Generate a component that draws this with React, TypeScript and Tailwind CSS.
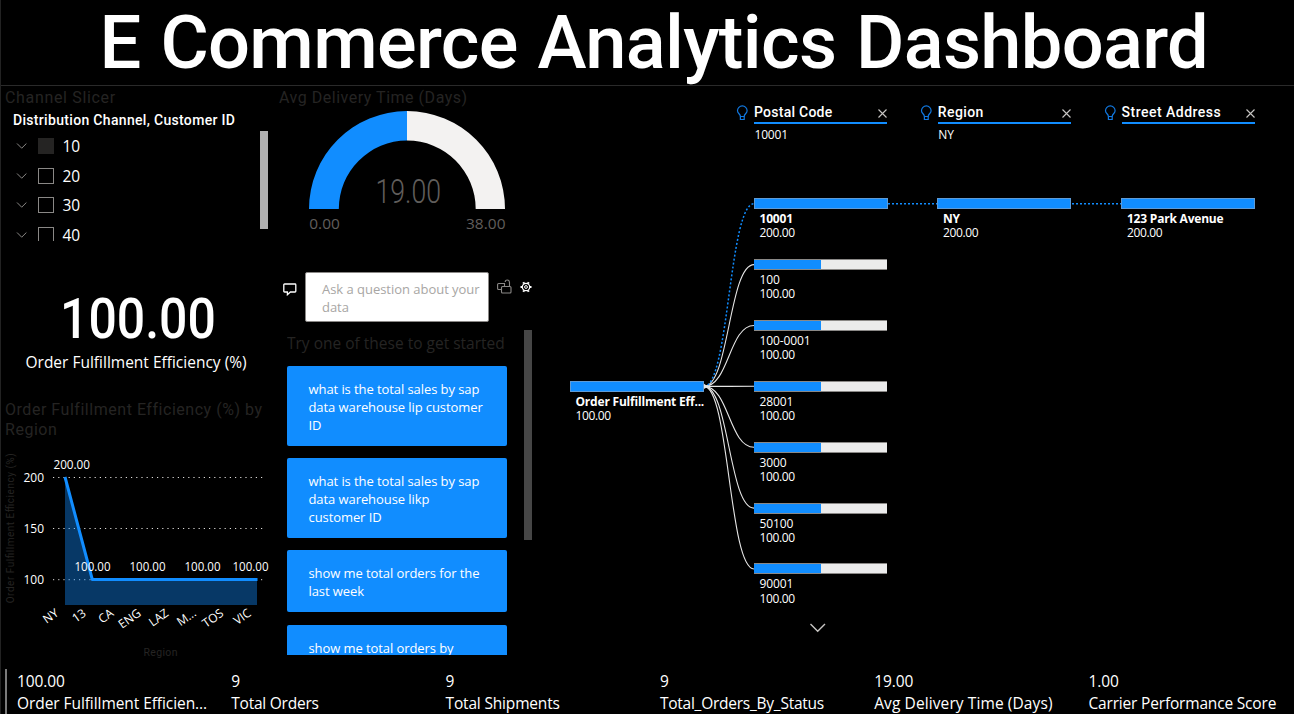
import React from "react";

const DIN = "font-['Roboto',sans-serif]";

const channels = [
  { id: "10", filled: true },
  { id: "20", filled: false },
  { id: "30", filled: false },
  { id: "40", filled: false },
];

function ChannelSlicer() {
  return (
    <section className="flex h-[186px] flex-col">
      <h2 className={`${DIN} h-[23px] pl-[5px] text-[16px] leading-[23px] tracking-[0.66px] text-[#252423]`}>Channel Slicer</h2>
      <div className={`${DIN} h-[22px] pl-[13px] text-[14px] font-medium leading-[23px] tracking-[0.32px] text-white`}>
        Distribution Channel, Customer ID
      </div>
      <div className="flex justify-between pr-[7px]">
        <ul className="flex h-[110px] flex-col overflow-hidden pl-[16px]">
          {channels.map((c) => (
            <li key={c.id} className="flex h-[29.7px] shrink-0 items-center text-[15.5px] leading-[29px] text-white">
              <svg width="12" height="8" viewBox="0 0 12 8" fill="none" stroke="#8a8886" strokeWidth="1">
                <path d="M1 1.5 L5.7 6.2 L10.4 1.5" />
              </svg>
              <span className={c.filled ? "ml-[10px] h-4 w-4 bg-[#252423]" : "ml-[10px] h-4 w-4 border border-[#8a8886]"} />
              <span className="ml-[8.5px] mt-[1px]">{c.id}</span>
            </li>
          ))}
        </ul>
        <div className="h-[98px] w-2 bg-[#b0b0b0]" />
      </div>
    </section>
  );
}

function EfficiencyCard() {
  return (
    <section className="flex h-[114px] flex-col pt-[2px]">
      <div className={`${DIN} ml-[59.5px] h-[62px] origin-left scale-x-[0.908] text-[55px] font-medium leading-[62px] text-white`}>100.00</div>
      <div className="ml-[25.5px] h-6 text-[15.5px] leading-6 text-white">Order Fulfillment Efficiency (%)</div>
    </section>
  );
}

const regions = ["NY", "13", "CA", "ENG", "LAZ", "M...", "TOS", "VIC"];
const ticks = [
  { label: "200", y: 36.5 },
  { label: "150", y: 87.5 },
  { label: "100", y: 138.7 },
];

function RegionChart() {
  return (
    <section className="flex flex-col">
      <h2 className={`${DIN} h-[41px] pl-[5px] text-[16px] leading-[20px] tracking-[0.53px] text-[#252423]`}>
        Order Fulfillment Efficiency (%) by
        <br />
        Region
      </h2>
      <svg width="274" height="219" viewBox="0 0 274 219" fontFamily="Open Sans, sans-serif" fontSize="12" fill="#fff">
        {ticks.map((t) => (
          <g key={t.label}>
            <line x1="53" x2="265" y1={t.y} y2={t.y} stroke="#dddbd9" strokeWidth="1" strokeDasharray="1.2 4" />
            <text x="23.5" y={t.y + 4} textLength="20.5" lengthAdjust="spacingAndGlyphs">{t.label}</text>
          </g>
        ))}
        <path d="M65 36 L92.3 138.5 H257 V164 H65 Z" fill="#118dff" fillOpacity="0.4" />
        <path d="M65 36 L92.3 138.5 H257.5" fill="none" stroke="#118dff" strokeWidth="3" strokeLinejoin="round" />
        <text x="53.5" y="28" textLength="36.5" lengthAdjust="spacingAndGlyphs">200.00</text>
        {[74.5, 129.5, 184.5, 232.5].map((x) => (
          <text key={x} x={x} y="130" textLength="36" lengthAdjust="spacingAndGlyphs">100.00</text>
        ))}
        {regions.map((r, i) => (
          <text key={r} textAnchor="end" transform={`translate(${59.5 + i * 27.5} 174) rotate(-35)`}>{r}</text>
        ))}
        <g fontFamily="Roboto, sans-serif" fill="#252423">
          <text transform="translate(13.8 162.3) rotate(-90)" fontSize="10" textLength="150">Order Fulfillment Efficiency (%)</text>
          <text x="143.5" y="215" fontSize="10.5" textLength="34">Region</text>
        </g>
      </svg>
    </section>
  );
}

function DeliveryGauge() {
  return (
    <section className="flex h-[186px] flex-col">
      <h2 className={`${DIN} h-[23px] pl-[4px] text-[16px] leading-[23px] tracking-[0.52px] text-[#252423]`}>Avg Delivery Time (Days)</h2>
      <svg width="275" height="130" viewBox="0 0 275 130" fill="#605e5c">
        <path d="M34 100 A98 98 0 0 1 132 2 V31.5 A68.5 68.5 0 0 0 63.8 100 Z" fill="#118dff" />
        <path d="M132 2 A98 98 0 0 1 230 100 H200.7 A68.5 68.5 0 0 0 132 31.5 Z" fill="#f3f2f1" />
        <text x="100.5" y="93.7" fontFamily="Roboto, sans-serif" fontWeight="300" fontSize="32.5" textLength="65.5" lengthAdjust="spacingAndGlyphs">19.00</text>
        <g fontFamily="Open Sans, sans-serif" fontSize="15">
          <text x="34.3" y="120.4" textLength="30.5" lengthAdjust="spacingAndGlyphs">0.00</text>
          <text x="191" y="120.4" textLength="39.5" lengthAdjust="spacingAndGlyphs">38.00</text>
        </g>
      </svg>
    </section>
  );
}

const suggestions = [
  { lines: ["what is the total sales by sap", "data warehouse lip customer", "ID"] },
  { lines: ["what is the total sales by sap", "data warehouse likp", "customer ID"] },
  { lines: ["show me total orders for the", "last week"] },
  { lines: ["show me total orders by"] },
];

function QuestionPanel() {
  return (
    <section className="flex h-[383px] flex-col">
      <div className="flex h-[50px] pl-[8px]">
        <svg className="mt-[11px]" width="14" height="13" viewBox="0 0 14 13" fill="none" stroke="#fff" strokeWidth="1.3">
          <path d="M1.6 1 H12 Q12.8 1 12.8 1.8 V8.2 Q12.8 9 12 9 H7.4 L4.4 11.7 V9 H1.6 Q0.8 9 0.8 8.2 V1.8 Q0.8 1 1.6 1 Z" />
        </svg>
        <div className="ml-[8px] w-[183.5px] rounded-[2px] border border-[#8a8886] bg-white pl-[16px] pt-[7px] text-[13px] leading-[18px] tracking-[-0.03px] text-[#a8a6a4]">
          Ask a question about your
          <br />
          data
        </div>
        <svg className="ml-[8px] mt-[7px]" width="15" height="15" viewBox="0 0 15 15" fill="none" stroke="#8a8886" strokeWidth="1.1">
          <rect x="4.5" y="7.5" width="9.5" height="6.5" rx="1" />
          <path d="M7.5 7.5 V4.5 H1.6 Q0.6 4.5 0.6 5.5 V9.5 Q0.6 10.5 1.6 10.5 H4.5" />
          <path d="M12.5 7.5 V3.5 Q12.5 1 10.3 1 Q8.2 1 8.2 3" />
        </svg>
        <svg className="ml-[8px] mt-[9px]" width="12" height="12" viewBox="0 0 12 12" fill="none" stroke="#fff">
          <circle cx="6" cy="6" r="3.7" strokeWidth="1.2" />
          <circle cx="6" cy="6" r="1.4" strokeWidth="1" />
          <path d="M9.9 6 H11.5 M2.1 6 H0.5 M7.95 9.4 L8.75 10.8 M4.05 9.4 L3.25 10.8 M7.95 2.6 L8.75 1.2 M4.05 2.6 L3.25 1.2" strokeWidth="2" />
        </svg>
      </div>
      <div className="flex pl-[12px] pt-[8px]">
        <div className="flex h-[325.5px] w-[220px] flex-col gap-[12.3px] overflow-hidden">
          <div className="h-[24px] shrink-0 whitespace-nowrap pt-[1px] text-[15.5px] leading-[25px] text-[#252423]">Try one of these to get started</div>
          {suggestions.map((s, i) => (
            <button key={i} className="shrink-0 rounded-[2px] bg-[#118dff] pb-[12px] pl-[21.5px] pt-[14px] text-left text-[13px] leading-[18px] tracking-[-0.08px] text-white">
              {s.lines.map((l) => (
                <span key={l} className="block">{l}</span>
              ))}
            </button>
          ))}
        </div>
        <div className="ml-[17px] h-[210px] w-2 bg-[#464646]" />
      </div>
    </section>
  );
}

type TreeNode = { name: string; value: string; x: number; y: number; half?: boolean; bold?: boolean };

const nodes: TreeNode[] = [
  { name: "Order Fulfillment Eff...", value: "100.00", x: 20, y: 300.3, bold: true },
  { name: "10001", value: "200.00", x: 204, y: 117.6, bold: true },
  { name: "100", value: "100.00", x: 204, y: 178.6, half: true },
  { name: "100-0001", value: "100.00", x: 204, y: 239.5, half: true },
  { name: "28001", value: "100.00", x: 204, y: 300.3, half: true },
  { name: "3000", value: "100.00", x: 204, y: 361.2, half: true },
  { name: "50100", value: "100.00", x: 204, y: 422.1, half: true },
  { name: "90001", value: "100.00", x: 204, y: 483, half: true },
  { name: "NY", value: "200.00", x: 387.4, y: 117.6, bold: true },
  { name: "123 Park Avenue", value: "200.00", x: 571.4, y: 117.6, bold: true },
];

const levels = [
  { title: "Postal Code", value: "10001", track: "tracking-[0.25px]" },
  { title: "Region", value: "NY", track: "tracking-[0.4px]" },
  { title: "Street Address", value: "", track: "tracking-[0.48px]" },
];

function DecompositionTree() {
  return (
    <section className="relative h-[574px] w-[744px]">
      <div className="flex pl-[186px] pt-[16px]">
        {levels.map((l) => (
          <div key={l.title} className="flex w-[183.8px]">
            <svg className="mt-[3px] shrink-0" width="13" height="17" viewBox="0 0 13 17" fill="none" stroke="#1178e0" strokeWidth="1.2">
              <path d="M4.4 11.5 C4.4 9 1.5 8.5 1.5 5.7 A4.8 4.8 0 0 1 11.1 5.7 C11.1 8.5 8.2 9 8.2 11.5 Z" />
              <path d="M4.4 11.5 V14.5 H8.2 V11.5" />
            </svg>
            <div className="ml-[5px] w-[133px]">
              <div className={`${DIN} ${l.track} flex h-[22px] items-center justify-between border-b-2 border-[#118dff] text-[14px] font-medium leading-[20px] text-white`}>
                <span>{l.title}</span>
                <svg className="mt-[3px]" width="9" height="9" viewBox="0 0 9 9" stroke="#c8c6c4" strokeWidth="1.1">
                  <path d="M0.5 0.5 L8.5 8.5 M8.5 0.5 L0.5 8.5" />
                </svg>
              </div>
              <div className="pl-[0.5px] text-[12px] leading-[21px] tracking-[-0.2px] text-white">{l.value}</div>
            </div>
          </div>
        ))}
      </div>
      <svg className="absolute left-0 top-0" width="744" height="574" viewBox="0 0 744 574" fill="none">
        {nodes
          .filter((n) => n.half)
          .map((n) => (
            <path key={n.name} d={`M154 300.4 C179 300.4 179 ${n.y} 204 ${n.y}`} stroke="#e6e6e6" strokeWidth="1.1" />
          ))}
        <path d="M154 300.4 C179 300.4 179 117.8 204 117.8" stroke="#118dff" strokeWidth="1.5" strokeDasharray="2 2" />
        <path d="M338 117.8 H387 M522 117.8 H571" stroke="#118dff" strokeWidth="1.5" strokeDasharray="2 2" />
        <path d="M154 297.8 L158 300.4 L154 303 Z" fill="#e6e6e6" />
        <path d="M260.5 538 L267.7 545.2 L275 538" stroke="#c8c6c4" strokeWidth="1.4" />
      </svg>
      {nodes.map((n) => (
        <div key={n.name} className="absolute w-[134px]" style={{ left: n.x, top: n.y - 5.6 }}>
          {n.half ? (
            <div className="flex h-[11px] w-[133px] border-y border-[#8a8886]">
              <div className="h-full w-[66.5px] bg-[#118dff]" />
              <div className="h-full flex-1 bg-[#ebebeb]" />
            </div>
          ) : (
            <div className="h-[11px] border border-[#5f9bd6] bg-[#118dff]" />
          )}
          <div className="whitespace-nowrap pl-[5.5px] pt-[3px] text-[12px] leading-[14.3px] text-white">
            <div className={n.bold ? "font-bold tracking-[-0.2px]" : "tracking-[-0.1px]"}>{n.name}</div>
            <div className="tracking-[-0.35px]">{n.value}</div>
          </div>
        </div>
      ))}
    </section>
  );
}

const metrics = [
  { value: "100.00", label: "Order Fulfillment Efficien...", track: "tracking-[-0.07px]" },
  { value: "9", label: "Total Orders", track: "tracking-[-0.24px]" },
  { value: "9", label: "Total Shipments", track: "tracking-[-0.18px]" },
  { value: "9", label: "Total_Orders_By_Status", track: "tracking-[-0.24px]" },
  { value: "19.00", label: "Avg Delivery Time (Days)", track: "tracking-[0.1px]" },
  { value: "1.00", label: "Carrier Performance Score", track: "tracking-[-0.18px]" },
];

export default function App() {
  return (
    <div className="h-[714px] w-[1294px] overflow-hidden border-l border-[#222] bg-black font-['Open_Sans',sans-serif]">
      <header className="h-[86px] border-b border-[#2a2a2a]">
        <h1 className={`${DIN} whitespace-nowrap pl-[98.5px] text-[74px] font-medium leading-[85px] tracking-[-0.66px] text-white [word-spacing:2px]`}>
          E Commerce Analytics Dashboard
        </h1>
      </header>
      <main className="flex h-[583px]">
        <div className="-ml-px flex w-[275px] shrink-0 flex-col">
          <ChannelSlicer />
          <div className="h-[14px]" />
          <EfficiencyCard />
          <div className="-mt-px h-px" />
          <RegionChart />
        </div>
        <div className="flex w-[275px] shrink-0 flex-col">
          <DeliveryGauge />
          <QuestionPanel />
        </div>
        <DecompositionTree />
      </main>
      <footer className="ml-[4px] flex h-[45px] border-l-2 border-[#7a7a7a] pl-[10px]">
        {metrics.map((m) => (
          <div key={m.label} className="flex w-[214.3px] shrink-0 flex-col whitespace-nowrap text-[15.5px] leading-[22px] text-white">
            <span className="mt-[1px] tracking-[-0.1px]">{m.value}</span>
            <span className={m.track}>{m.label}</span>
          </div>
        ))}
      </footer>
    </div>
  );
}
